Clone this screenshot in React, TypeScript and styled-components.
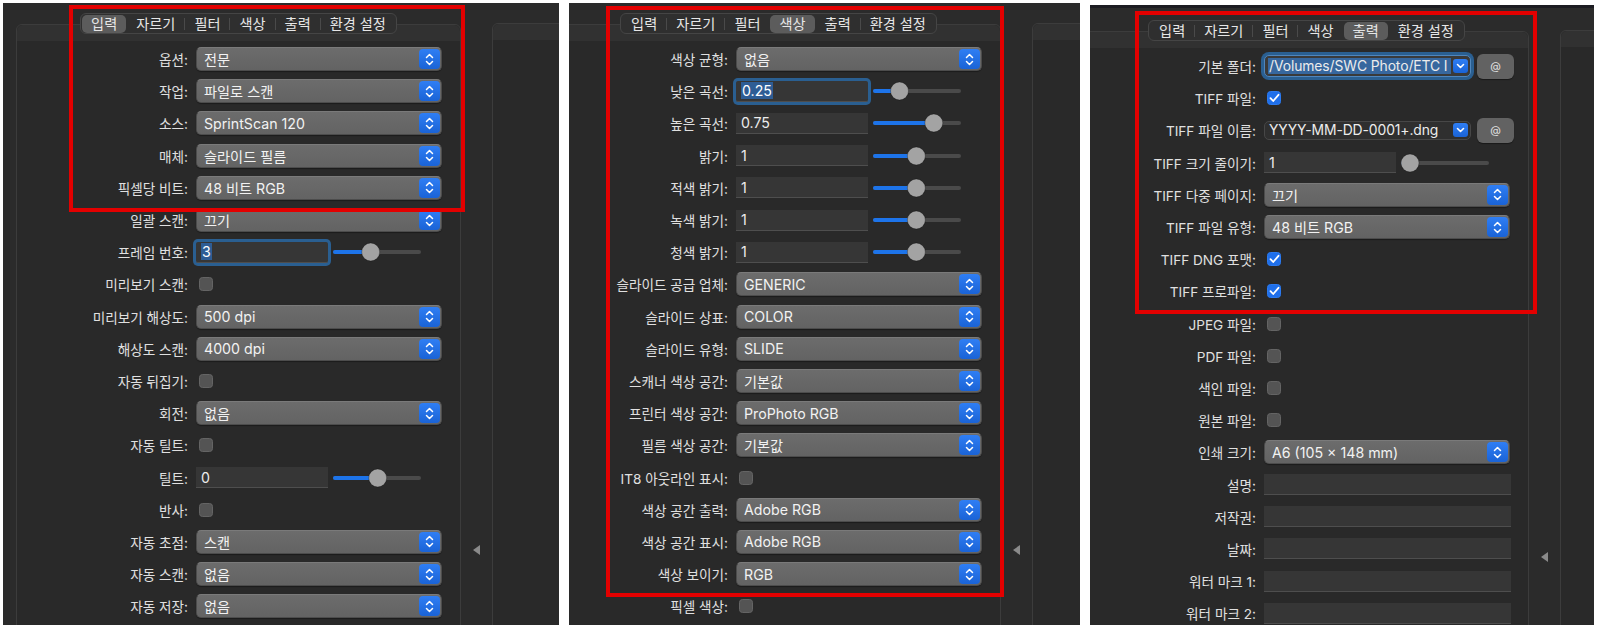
import React from 'react';
import styled, { createGlobalStyle } from 'styled-components';

const GlobalStyle = createGlobalStyle`
    html, body {
        margin: 0;
        padding: 0;
        background: #ffffff;
    }
    body {
        width: 1600px;
        height: 625px;
        overflow: hidden;
        font-family: Inter, 'Noto Sans CJK KR', sans-serif;
        -webkit-font-smoothing: antialiased;
    }
`;

type RowSpec =
    | { kind: 'popup'; label: string; value: string }
    | { kind: 'field'; label: string; value: string; focused?: boolean; slider?: number }
    | { kind: 'check'; label: string; checked?: boolean }
    | { kind: 'combo'; label: string; value: string; focused?: boolean }
    | { kind: 'blank'; label: string };

interface PanelSpec {
    width: number;
    top: number;
    offset: number;
    active: number;
    dark?: boolean;
    red: { left: number; top: number; width: number; height: number };
    rows: RowSpec[];
}

const TABS = ['입력', '자르기', '필터', '색상', '출력', '환경 설정'];

const Strip = styled.div`
    display: flex;
    align-items: stretch;
    gap: 10px;
    height: 625px;
    padding: 3px 0 0 3px;
    box-sizing: border-box;
`;

const Panel = styled.div<{ $width: number; $dark?: boolean }>`
    position: relative;
    flex-shrink: 0;
    width: ${(p) => p.$width}px;
    margin-top: ${(p) => (p.$dark ? 2 : 0)}px;
    border-top: ${(p) => (p.$dark ? '3px solid #1c1c22' : 'none')};
    background: #2b2b2b;
    overflow: hidden;
`;

const Window = styled.div<{ $top: number; $offset: number }>`
    display: flex;
    align-items: flex-start;
    padding-top: ${(p) => p.$top}px;
    margin-left: ${(p) => p.$offset}px;
`;

const Main = styled.div`
    display: flex;
    flex-direction: column;
    align-items: center;
    width: 445px;
    flex-shrink: 0;
`;

const TabBar = styled.div`
    position: relative;
    z-index: 1;
    display: flex;
    align-items: center;
    height: 21px;
    padding: 0 1px;
    background: #2f2f2f;
    border: 1px solid #454545;
    border-radius: 6px;
    box-sizing: border-box;
`;

const Tab = styled.div<{ $on: boolean }>`
    height: 18px;
    line-height: 18px;
    padding: 0 9px;
    border-radius: 5px;
    font-size: 14.2px;
    color: #e6e6e6;
    background: ${(p) => (p.$on ? '#5c5c5c' : 'transparent')};
    white-space: nowrap;
`;

const TabSep = styled.div<{ $hidden: boolean }>`
    width: 1px;
    height: 12px;
    background: ${(p) => (p.$hidden ? 'transparent' : '#4a4a4a')};
`;

const Box = styled.div`
    width: 100%;
    min-height: 700px;
    margin-top: -10px;
    background: #292929;
    border: 1px solid #3c3c3c;
    border-radius: 6px;
    box-sizing: border-box;
`;

const BoxHead = styled.div`
    height: 16px;
    background: #313131;
    border-radius: 6px 6px 0 0;
`;

const Rows = styled.div`
    display: flex;
    flex-direction: column;
    padding-top: 2px;
`;

const Row = styled.div`
    display: grid;
    grid-template-columns: 171px auto;
    column-gap: 8px;
    align-items: center;
    height: 32.2px;
`;

const Label = styled.div`
    text-align: right;
    white-space: nowrap;
    font-size: 13.6px;
    color: #e0e0e0;
`;

const Popup = styled.div`
    display: flex;
    align-items: center;
    justify-content: space-between;
    width: 246px;
    height: 24px;
    box-sizing: border-box;
    padding-left: 7px;
    border: 1px solid #4c4c4c;
    border-top-color: #7a7a7a;
    border-radius: 5px;
    background: linear-gradient(#6c6c6c, #636363);
    box-shadow: 0 1px 1px rgba(0, 0, 0, 0.35);
    font-size: 14.2px;
    color: #f2f2f2;
    white-space: nowrap;
`;

const Stepper = styled.div`
    display: flex;
    align-items: center;
    justify-content: center;
    width: 21px;
    height: 20px;
    margin-right: 1px;
    border-radius: 4px;
    background: linear-gradient(#2f7ef4, #1a63d6);
`;

const FieldRow = styled.div`
    display: flex;
    align-items: center;
    gap: 5px;
`;

const TextField = styled.div<{ $focused?: boolean; $wide?: boolean }>`
    display: flex;
    align-items: center;
    width: ${(p) => (p.$wide ? 247 : 132)}px;
    height: 21px;
    box-sizing: border-box;
    padding-left: 5px;
    background: #363636;
    border-bottom: 1px solid #4e4e4e;
    box-shadow: ${(p) => (p.$focused ? '0 0 0 3px #2a5f91' : 'none')};
    border-radius: ${(p) => (p.$focused ? '2px' : '0')};
    font-size: 14.2px;
    color: #ececec;
`;

const Selected = styled.span`
    background: #2e5d95;
    color: #ffffff;
    padding: 0 1px;
`;

const Check = styled.div<{ $on?: boolean }>`
    display: flex;
    align-items: center;
    justify-content: center;
    width: 14px;
    height: 14px;
    margin-left: 3px;
    box-sizing: border-box;
    border-radius: 3.5px;
    background: ${(p) => (p.$on ? '#1f6fea' : '#545454')};
    border: 1px solid ${(p) => (p.$on ? '#2b7af0' : '#646464')};
`;

const ComboWrap = styled.div`
    display: flex;
    align-items: center;
    gap: 6px;
`;

const Combo = styled.div<{ $focused?: boolean }>`
    display: flex;
    align-items: center;
    width: 207px;
    height: ${(p) => (p.$focused ? 22 : 19)}px;
    box-sizing: border-box;
    padding: 0 2px 0 3px;
    border: 1px solid ${(p) => (p.$focused ? '#4f86bd' : '#474747')};
    border-radius: 5px;
    background: ${(p) => (p.$focused ? '#3a3a3a' : '#2f2f2f')};
    box-shadow: ${(p) => (p.$focused ? '0 0 0 3px #2a5f91' : 'none')};
    font-size: 13.9px;
    letter-spacing: -0.1px;
    color: #ececec;
`;

const ComboText = styled.div<{ $sel?: boolean }>`
    flex: 1;
    overflow: hidden;
    white-space: nowrap;
    padding-left: 1px;
    margin-right: 2px;
    background: ${(p) => (p.$sel ? '#37679e' : 'transparent')};
`;

const ComboBtn = styled.div`
    display: flex;
    align-items: center;
    justify-content: center;
    width: 15px;
    height: 14px;
    flex-shrink: 0;
    border-radius: 3px;
    background: linear-gradient(#2f7ef4, #1a63d6);
`;

const AtButton = styled.div`
    display: flex;
    align-items: center;
    justify-content: center;
    width: 37px;
    height: 25px;
    border-radius: 6px;
    background: #626262;
    box-shadow: 0 1px 1px rgba(0, 0, 0, 0.4);
    font-size: 11px;
    color: #e0e0e0;
`;

const ArrowCol = styled.div`
    width: 31px;
    flex-shrink: 0;
    display: flex;
    justify-content: center;
    padding-top: 532px;
`;

const SideBox = styled.div`
    width: 200px;
    min-height: 700px;
    flex-shrink: 0;
    margin-top: 10px;
    background: #292929;
    border: 1px solid #3c3c3c;
    border-radius: 6px;
    box-sizing: border-box;
`;

const Mark = styled.div<{ $l: number; $t: number; $w: number; $h: number }>`
    position: absolute;
    left: ${(p) => p.$l}px;
    top: ${(p) => p.$t}px;
    width: ${(p) => p.$w}px;
    height: ${(p) => p.$h}px;
    border: 4px solid #e30000;
    box-sizing: border-box;
    pointer-events: none;
`;

const StepIcon = () => (
    <svg width='9' height='13' viewBox='0 0 9 13'>
        <path d='M1.5 4.5 L4.5 1.5 L7.5 4.5 M1.5 8.5 L4.5 11.5 L7.5 8.5' stroke='#fff' strokeWidth='1.5' fill='none' strokeLinecap='round' strokeLinejoin='round' />
    </svg>
);

const DownIcon = () => (
    <svg width='9' height='6' viewBox='0 0 9 6'>
        <path d='M1.5 1.5 L4.5 4.5 L7.5 1.5' stroke='#fff' strokeWidth='1.6' fill='none' strokeLinecap='round' strokeLinejoin='round' />
    </svg>
);

const CheckIcon = () => (
    <svg width='11' height='10' viewBox='0 0 11 10'>
        <path d='M1.5 5.2 L4.2 8 L9.5 1.8' stroke='#fff' strokeWidth='1.8' fill='none' strokeLinecap='round' strokeLinejoin='round' />
    </svg>
);

const Slider = ({ value }: { value: number }) => {
    const cx = 9 + 70 * value;
    return (
        <svg width='88' height='20' viewBox='0 0 88 20'>
            <rect x='0' y='8' width='88' height='4' rx='2' fill='#4a4a4a' />
            <rect x='0' y='8' width={cx} height='4' rx='2' fill='#1d74ea' />
            <circle cx={cx} cy='10' r='9' fill='#a3a3a3' stroke='rgba(0,0,0,0.4)' strokeWidth='0.75' />
        </svg>
    );
};

const Control = ({ row }: { row: RowSpec }) => {
    switch (row.kind) {
        case 'popup':
            return (
                <Popup>
                    <span>{row.value}</span>
                    <Stepper>
                        <StepIcon />
                    </Stepper>
                </Popup>
            );
        case 'field':
            return (
                <FieldRow>
                    <TextField $focused={row.focused}>
                        {row.focused ? <Selected>{row.value}</Selected> : row.value}
                    </TextField>
                    {row.slider !== undefined && <Slider value={row.slider} />}
                </FieldRow>
            );
        case 'check':
            return <Check $on={row.checked}>{row.checked && <CheckIcon />}</Check>;
        case 'combo':
            return (
                <ComboWrap>
                    <Combo $focused={row.focused}>
                        <ComboText $sel={row.focused}>{row.value}</ComboText>
                        <ComboBtn>
                            <DownIcon />
                        </ComboBtn>
                    </Combo>
                    <AtButton>@</AtButton>
                </ComboWrap>
            );
        default:
            return <TextField $wide />;
    }
};

const Arrow = () => (
    <svg width='8' height='10' viewBox='0 0 8 10'>
        <polygon points='7,0 7,10 0,5' fill='#8a8a8a' />
    </svg>
);

const ScanPanel = ({ spec }: { spec: PanelSpec }) => (
    <Panel $width={spec.width} $dark={spec.dark}>
        <Window $top={spec.top} $offset={spec.offset}>
            <Main>
                <TabBar>
                    {TABS.map((t, i) => (
                        <React.Fragment key={t}>
                            {i > 0 && <TabSep $hidden={i === spec.active || i - 1 === spec.active} />}
                            <Tab $on={i === spec.active}>{t}</Tab>
                        </React.Fragment>
                    ))}
                </TabBar>
                <Box>
                    <BoxHead />
                    <Rows>
                        {spec.rows.map((r) => (
                            <Row key={r.label}>
                                <Label>{r.label}:</Label>
                                <Control row={r} />
                            </Row>
                        ))}
                    </Rows>
                </Box>
            </Main>
            <ArrowCol>
                <Arrow />
            </ArrowCol>
            <SideBox>
                <BoxHead />
            </SideBox>
        </Window>
        <Mark $l={spec.red.left} $t={spec.red.top} $w={spec.red.width} $h={spec.red.height} />
    </Panel>
);

const panels: PanelSpec[] = [
    {
        width: 556,
        top: 10,
        offset: 13,
        active: 0,
        red: { left: 66, top: 2, width: 396, height: 207 },
        rows: [
            { kind: 'popup', label: '옵션', value: '전문' },
            { kind: 'popup', label: '작업', value: '파일로 스캔' },
            { kind: 'popup', label: '소스', value: 'SprintScan 120' },
            { kind: 'popup', label: '매체', value: '슬라이드 필름' },
            { kind: 'popup', label: '픽셀당 비트', value: '48 비트 RGB' },
            { kind: 'popup', label: '일괄 스캔', value: '끄기' },
            { kind: 'field', label: '프레임 번호', value: '3', focused: true, slider: 0.41 },
            { kind: 'check', label: '미리보기 스캔' },
            { kind: 'popup', label: '미리보기 해상도', value: '500 dpi' },
            { kind: 'popup', label: '해상도 스캔', value: '4000 dpi' },
            { kind: 'check', label: '자동 뒤집기' },
            { kind: 'popup', label: '회전', value: '없음' },
            { kind: 'check', label: '자동 틸트' },
            { kind: 'field', label: '틸트', value: '0', slider: 0.51 },
            { kind: 'check', label: '반사' },
            { kind: 'popup', label: '자동 초점', value: '스캔' },
            { kind: 'popup', label: '자동 스캔', value: '없음' },
            { kind: 'popup', label: '자동 저장', value: '없음' },
        ],
    },
    {
        width: 511,
        top: 10,
        offset: -13,
        active: 3,
        red: { left: 37, top: 3, width: 398, height: 591 },
        rows: [
            { kind: 'popup', label: '색상 균형', value: '없음' },
            { kind: 'field', label: '낮은 곡선', value: '0.25', focused: true, slider: 0.25 },
            { kind: 'field', label: '높은 곡선', value: '0.75', slider: 0.74 },
            { kind: 'field', label: '밝기', value: '1', slider: 0.49 },
            { kind: 'field', label: '적색 밝기', value: '1', slider: 0.49 },
            { kind: 'field', label: '녹색 밝기', value: '1', slider: 0.49 },
            { kind: 'field', label: '청색 밝기', value: '1', slider: 0.49 },
            { kind: 'popup', label: '슬라이드 공급 업체', value: 'GENERIC' },
            { kind: 'popup', label: '슬라이드 상표', value: 'COLOR' },
            { kind: 'popup', label: '슬라이드 유형', value: 'SLIDE' },
            { kind: 'popup', label: '스캐너 색상 공간', value: '기본값' },
            { kind: 'popup', label: '프린터 색상 공간', value: 'ProPhoto RGB' },
            { kind: 'popup', label: '필름 색상 공간', value: '기본값' },
            { kind: 'check', label: 'IT8 아웃라인 표시' },
            { kind: 'popup', label: '색상 공간 출력', value: 'Adobe RGB' },
            { kind: 'popup', label: '색상 공간 표시', value: 'Adobe RGB' },
            { kind: 'popup', label: '색상 보이기', value: 'RGB' },
            { kind: 'check', label: '픽셀 색상' },
        ],
    },
    {
        width: 504,
        top: 12,
        offset: -6,
        active: 4,
        dark: true,
        red: { left: 45, top: 3, width: 402, height: 303 },
        rows: [
            { kind: 'combo', label: '기본 폴더', value: '/Volumes/SWC Photo/ETC I', focused: true },
            { kind: 'check', label: 'TIFF 파일', checked: true },
            { kind: 'combo', label: 'TIFF 파일 이름', value: 'YYYY-MM-DD-0001+.dng' },
            { kind: 'field', label: 'TIFF 크기 줄이기', value: '1', slider: 0 },
            { kind: 'popup', label: 'TIFF 다중 페이지', value: '끄기' },
            { kind: 'popup', label: 'TIFF 파일 유형', value: '48 비트 RGB' },
            { kind: 'check', label: 'TIFF DNG 포맷', checked: true },
            { kind: 'check', label: 'TIFF 프로파일', checked: true },
            { kind: 'check', label: 'JPEG 파일' },
            { kind: 'check', label: 'PDF 파일' },
            { kind: 'check', label: '색인 파일' },
            { kind: 'check', label: '원본 파일' },
            { kind: 'popup', label: '인쇄 크기', value: 'A6 (105 x 148 mm)' },
            { kind: 'blank', label: '설명' },
            { kind: 'blank', label: '저작권' },
            { kind: 'blank', label: '날짜' },
            { kind: 'blank', label: '워터 마크 1' },
            { kind: 'blank', label: '워터 마크 2' },
        ],
    },
];

export default function App() {
    return (
        <>
            <GlobalStyle />
            <Strip>
                {panels.map((p, i) => (
                    <ScanPanel key={i} spec={p} />
                ))}
            </Strip>
        </>
    );
}
